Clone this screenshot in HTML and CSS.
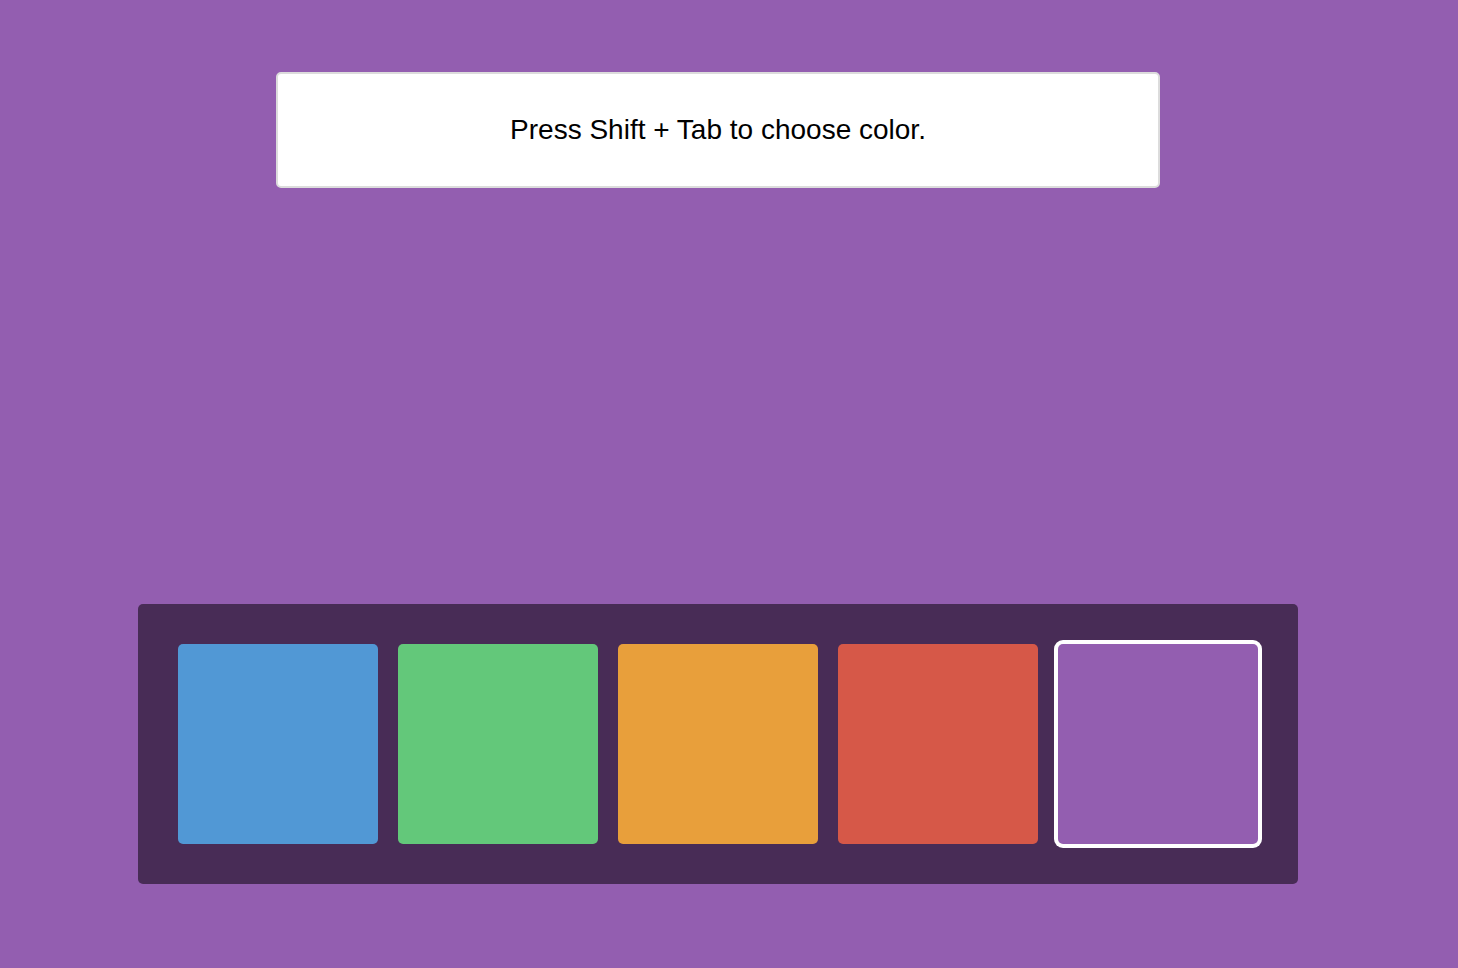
FILE: index.html
```html
<!DOCTYPE html>
<html>
<head>
<meta charset="utf-8">
<link rel="stylesheet" href="styles.css">
</head>
<body>
<main class="page">
  <div class="message">Press Shift + Tab to choose color.</div>
  <div class="palette">
    <button class="swatch blue"></button>
    <button class="swatch green"></button>
    <button class="swatch orange"></button>
    <button class="swatch red"></button>
    <button class="swatch purple selected"></button>
  </div>
</main>
</body>
</html>
```
FILE: styles.css
```css
html, body {
  margin: 0;
  padding: 0;
  background: #935eb0;
  height: 100%;
}
.page {
  width: 1436px;
  display: flex;
  flex-direction: column;
  align-items: center;
  padding-top: 72px;
  font-family: "Liberation Sans", Arial, sans-serif;
}
.message {
  box-sizing: border-box;
  width: 884px;
  height: 116px;
  background: #fff;
  border: 2px solid #dcdcdc;
  border-radius: 5px;
  display: flex;
  align-items: center;
  justify-content: center;
  font-size: 28px;
  color: #000;
}
.palette {
  margin-top: 416px;
  background: #482c56;
  border-radius: 5px;
  padding: 40px;
  display: flex;
  gap: 20px;
}
.swatch {
  width: 200px;
  height: 200px;
  border: 0;
  padding: 0;
  border-radius: 5px;
  display: block;
}
.blue { background: #5198d5; }
.green { background: #63c87a; }
.orange { background: #e89f3b; }
.red { background: #d65848; }
.purple { background: #935eb0; }
.selected {
  box-shadow: 0 0 0 4px #fff;
}
```
